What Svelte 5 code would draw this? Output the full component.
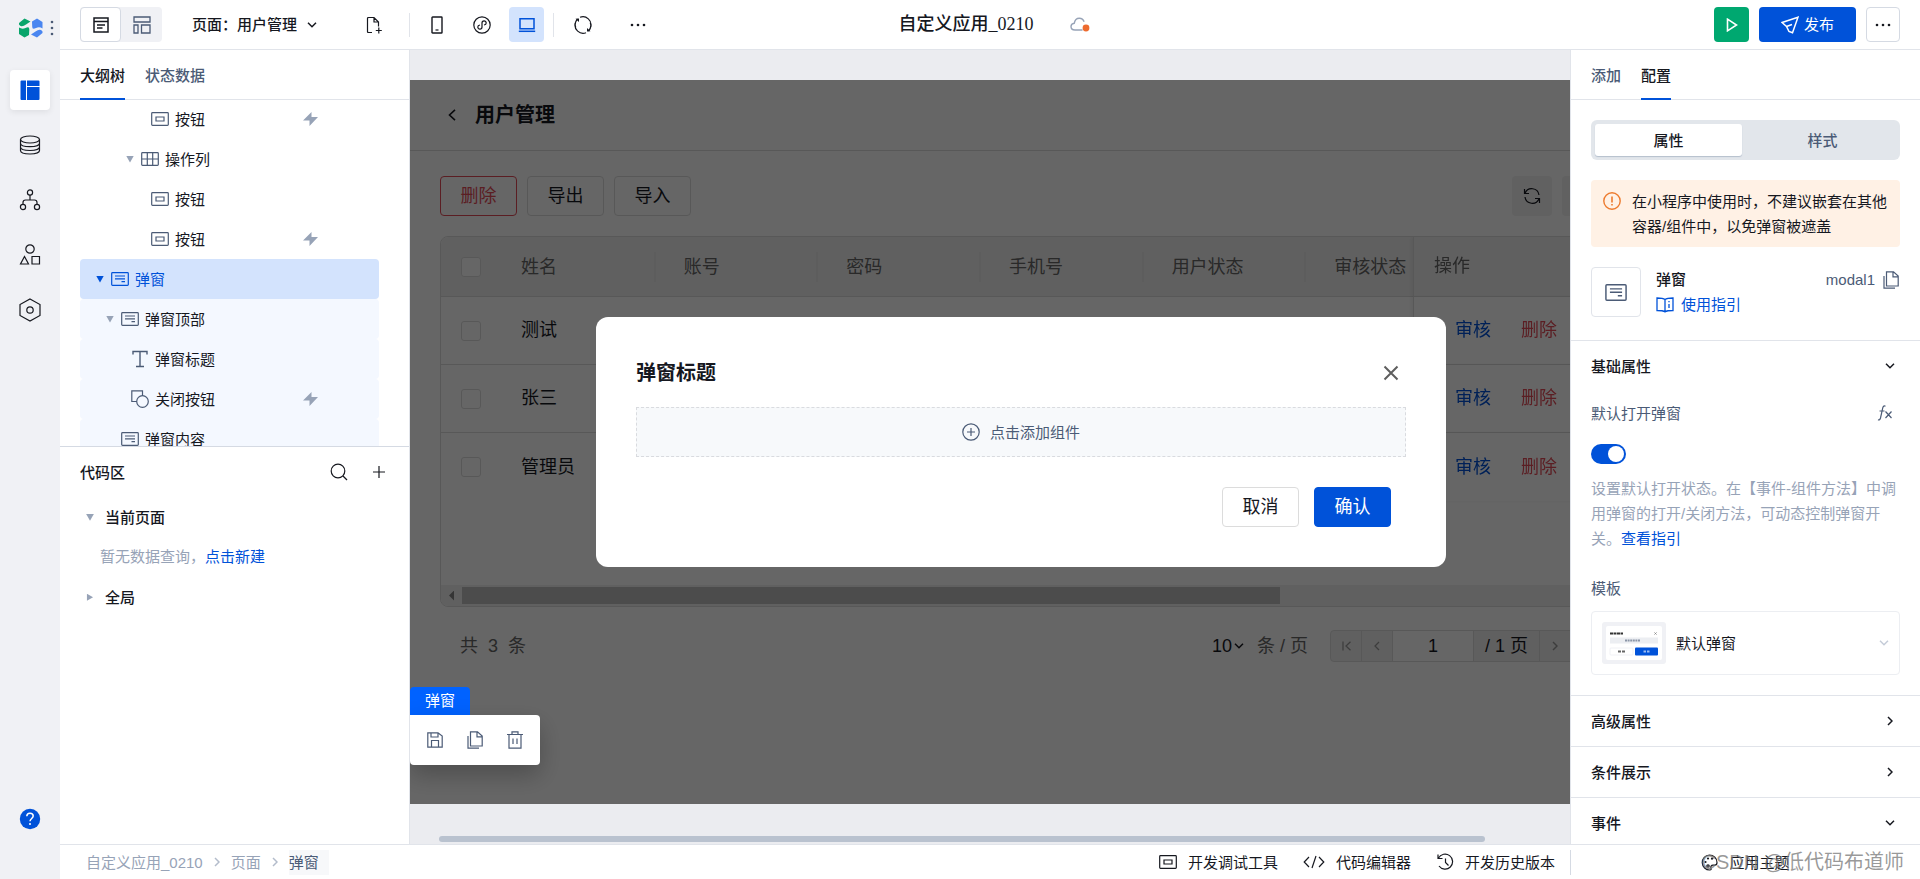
<script>
	let defaultOpen = $state(true);
	let pageNumber = $state('1');

	const icons = {
		logo: [24, 20, '<path fill="#09a56b" stroke="none" d="M0 5 5.500.5 11.500 3.500 7 6.500Q4.500 8.500 2.500 8.300 1 8 0 6.500zM0 9.500q3 2 6.500.5 4-2 3.800 1.500L10 17l-4.500 2.500L0 16z"/><path fill="#4a86f0" stroke="none" d="M13 3.500 18 .5 23.500 4v6.500q-3-2-6.500-.5-4 2-3.800-1.500zM23.500 15 18 19.500 12 16.500 16.500 13.500q2.500-2 4.500-1.800 1.500.3 2.500 1.800z"/>'],
		grip: [4, 16, '<g fill="#4b5b76" stroke="none"><circle cx="2" cy="2" r="1.300"/><circle cx="2" cy="8" r="1.300"/><circle cx="2" cy="14" r="1.300"/></g>'],
		layout: [20, 20, '<path fill="#0052d9" stroke="none" d="M1.500.5H6V20H1.500Q.5 20 .5 19V1.500Q.5.5 1.500.5zM7 .5h11.500q1 0 1 1V6H7zM7 7h12.500v12q0 1-1 1H7z"/>'],
		database: [22, 20, '<ellipse cx="11" cy="4.500" rx="9.500" ry="3.500"/><path d="M1.500 4.500v11c0 2 4 3.500 9.500 3.500s9.500-1.500 9.500-3.500v-11M1.500 8.200c0 2 4 3.500 9.500 3.500s9.500-1.500 9.500-3.500M1.500 12c0 2 4 3.500 9.500 3.500s9.500-1.500 9.500-3.500"/>'],
		flow: [22, 22, '<circle cx="11" cy="3.500" r="2.600"/><circle cx="4" cy="18" r="2.600"/><circle cx="18" cy="18" r="2.600"/><path d="M11 6v5M4 15v-1.500Q4 11 6.500 11h9q2.500 0 2.500 2.500V15"/>'],
		shapes: [22, 22, '<circle cx="11" cy="5" r="4.200"/><path d="M5.500 12.500 9.500 20h-8zM13 12.500h7.500V20H13z"/>'],
		hexagon: [24, 24, '<path d="m12 1 10 5.500v11L12 23 2 17.500v-11z"/><circle cx="12" cy="12" r="3.200"/>'],
		help: [22, 22, '<circle cx="11" cy="11" r="10.200" fill="#0052d9" stroke="none"/><path stroke="#fff" stroke-width="1.500" d="M7.800 8.300c0-2 1.400-3.100 3.200-3.100s3.200 1.100 3.200 2.900c0 2.300-3.200 2.600-3.200 5.200M11 15v2"/>'],
		page: [16, 16, '<path stroke-width="1.500" d="M1 1h14v14H1zM1 4.500h14M4 8h8M4 11h5.500"/>'],
		blocks: [18, 18, '<path stroke-width="1.300" d="M1 1h16v5H1zM1 9h4v8H1zM8.500 9H17v8H8.500z"/>'],
		down: [10, 6, '<path stroke-width="1.500" d="m1 .8 4 4 4-4"/>'],
		right: [6, 10, '<path stroke-width="1.500" d="m1 1 4 4-4 4"/>'],
		left: [6, 10, '<path stroke-width="1.300" d="M5 1 1 5l4 4"/>'],
		back: [8, 12, '<path stroke-width="1.600" d="M7 .8 1.500 6 7 11.200"/>'],
		first: [9, 10, '<path stroke-width="1.300" d="M1 .5v9M8.500.8 4 5l4.500 4.200"/>'],
		addFile: [18, 18, '<path d="M7 16.500H3.500Q2.500 16.500 2.500 15.500v-13q0-1 1-1H9L13.500 6v4.500M9 1.500V6h4.500M13.800 11.500v6M10.800 14.500h6"/>'],
		phone: [12, 18, '<rect x="1" y="1" width="10" height="16" rx=".6" stroke-width="1.400"/><path d="M4.500 14h3"/>'],
		mini: [18, 18, '<circle cx="9" cy="9" r="8.200"/><path d="M11 9c1.400-.2 2.200-1 2.200-2.100 0-1.200-1-2.100-2.100-2.100S9 5.700 9 6.900v4.200c0 1.200-1 2.100-2.100 2.100s-2.100-.9-2.100-2.100S5.600 9.200 7 9"/>'],
		laptop: [18, 16, '<path stroke-width="1.500" d="M2 1.800h14v10H2z"/><path stroke-width="1.500" d="M.8 14.300h16.400"/>'],
		sync: [20, 18, '<path d="M7 1.300A8.200 8.200 0 0 1 17.800 11M13 16.700A8.200 8.200 0 0 1 2.200 7M2.800 11.500A8.200 8.200 0 0 1 4.500 3M17.200 6.500A8.200 8.200 0 0 1 15.500 15"/><path fill="currentColor" stroke="none" d="M2.500 2.800 6 2.500V6zM17.500 15.200l-3.500.3V12z"/>'],
		dots: [16, 4, '<g fill="currentColor" stroke="none"><circle cx="2" cy="2" r="1.300"/><circle cx="8" cy="2" r="1.300"/><circle cx="14" cy="2" r="1.300"/></g>'],
		cloud: [20, 16, '<path stroke="#97a3b7" stroke-width="1.400" d="M12.500 13H5C2.500 13 1 11.300 1 9.500S2.300 6.400 4.300 6.200C4.800 3 6.800 1.200 9.300 1.200c2.400 0 4.100 1.500 4.800 3.600"/><circle cx="16" cy="11" r="3.400" fill="#ed6b2f" stroke="none"/>'],
		play: [12, 14, '<path stroke-width="1.600" d="M1.500 1.200 10.500 7l-9 5.800z"/>'],
		send: [18, 18, '<path stroke-width="1.500" d="M17 1.200 1 6.500 5.500 10.500 8 15.500 11.500 16.800zM5.500 10.500 11 8.500"/>'],
		button: [18, 14, '<rect x=".7" y=".7" width="16.600" height="12.600" rx=".8"/><path d="M5 5h8v4H5z"/>'],
		grid: [18, 14, '<rect x=".7" y=".7" width="16.600" height="12.600" rx=".8"/><path d="M.7 7h16.600M6.300.7v12.600M11.700.7v12.600"/>'],
		container: [18, 14, '<rect x=".7" y=".7" width="16.600" height="12.600" rx=".8"/><path d="M4 4h10M4 6.800h10M10.500 9.600H14"/>'],
		text: [18, 18, '<path stroke-width="1.400" d="M2 4.500V1.500h14v3M9 1.500v15M5 16.500h8"/>'],
		shape: [18, 18, '<path d="M6 11.500H.8V.8h10.700V6"/><circle cx="11.500" cy="11.500" r="5.800"/>'],
		bolt: [15, 14, '<path fill="#97a3b7" stroke="none" d="M8.500 0v5H15L6.500 14V8.500H0z"/>'],
		search: [18, 18, '<circle cx="8" cy="8" r="6.800"/><path d="m13 13 4 4"/>'],
		plus: [14, 14, '<path d="M7 1v12M1 7h12"/>'],
		refresh: [18, 18, '<path d="M1.500 2v4.500H6M2 6.300A7.300 7.300 0 0 1 16 8M16.500 16v-4.500H12M16 11.700A7.300 7.300 0 0 1 2 10"/>'],
		close: [16, 16, '<path stroke-width="2" d="m1.500 1.500 13 13M14.500 1.500l-13 13"/>'],
		addCircle: [18, 18, '<circle cx="9" cy="9" r="8.200"/><path d="M9 5v8M5 9h8"/>'],
		save: [16, 16, '<path d="M.8.8H11L15.200 4v11.200H.8zM4 .8V5h7V.8M4.500 15V8.500h7V15"/>'],
		copy: [16, 18, '<path d="M3.500.8h7L15.200 5v10H3.500zM10 .8v5h5M1 5v12.200h11"/>'],
		trash: [16, 18, '<path d="M0 3.500h16M5 3.500V.8h6v2.700M2 3.500v13.700h12V3.500M6 7.500v5.500M10 7.500v5.500"/>'],
		warn: [18, 18, '<circle cx="9" cy="9" r="8.200" stroke-width="1.400"/><path stroke-width="1.600" d="M9 4.500v6M9 12v1.600"/>'],
		book: [18, 16, '<path stroke-width="1.300" d="M9 2.500Q7 1 1 1v12.500q6 0 8 1.300 2-1.300 8-1.300V1Q11 1 9 2.500zM9 2.500v13M13 7v4M13 4v1.200"/>'],
		palette: [17, 17, '<path d="M8.500 1A7.500 7.500 0 1 0 9 16c1 0 1.500-.8 1-1.800-.7-1.600.3-3 2-3h1.800c1.600 0 2.200-1.200 2.200-2.700A7.500 7.500 0 0 0 8.500 1z"/><g fill="currentColor" stroke="none"><circle cx="4.500" cy="8" r="1.100"/><circle cx="7" cy="4.500" r="1.100"/><circle cx="11" cy="4.700" r="1.100"/></g><circle cx="7" cy="12" r="1.200"/>'],
		code: [22, 14, '<path d="M6 2 1.200 7 6 12M16 2l4.800 5L16 12M13 1 9 13"/>'],
		history: [18, 18, '<path d="M2.500 5A7.500 7.500 0 1 1 3 13M2 1.500v4h4.500M9.500 5.500v4l3 3"/>'],
		fx: [16, 16, '<path d="M8.500 1.200Q6.500.3 5.800 2.600L3.500 13Q2.800 15.500 1 14.700M2.500 6h5M8.500 6.500l6 6.500M14.500 6.500l-6 6.500"/>']
	};

	const sideItems = [
		{ icon: 'layout', label: '页面设计' },
		{ icon: 'database', label: '数据源' },
		{ icon: 'flow', label: '流程' },
		{ icon: 'shapes', label: '素材' },
		{ icon: 'hexagon', label: '设置' }
	];

	const treeRows = [
		{ level: 5, icon: 'button', name: '按钮', bolt: true },
		{ level: 4, icon: 'grid', name: '操作列', open: true },
		{ level: 5, icon: 'button', name: '按钮' },
		{ level: 5, icon: 'button', name: '按钮', bolt: true },
		{ level: 1, icon: 'container', name: '弹窗', open: true, selected: true },
		{ level: 2, icon: 'container', name: '弹窗顶部', open: true, inside: true },
		{ level: 3, icon: 'text', name: '弹窗标题', inside: true },
		{ level: 3, icon: 'shape', name: '关闭按钮', bolt: true, inside: true },
		{ level: 2, icon: 'container', name: '弹窗内容', inside: true }
	];

	const columns = ['姓名', '账号', '密码', '手机号', '用户状态', '审核状态'];
	const users = ['测试', '张三', '管理员'];

	const tools = [
		{ icon: 'button', name: '开发调试工具' },
		{ icon: 'code', name: '代码编辑器' },
		{ icon: 'history', name: '开发历史版本' }
	];
</script>

{#snippet icon(name)}
	<svg
		class="icon"
		width={icons[name][0]}
		height={icons[name][1]}
		viewBox="0 0 {icons[name][0]} {icons[name][1]}"
		aria-hidden="true"
	>{@html icons[name][2]}</svg>
{/snippet}

<div class="app">
	<aside class="sidebar">
		<div class="brand">
			{@render icon('logo')}
			{@render icon('grip')}
		</div>
		<nav>
			{#each sideItems as item, i}
				<button class:active={i === 0} aria-label={item.label}>{@render icon(item.icon)}</button>
			{/each}
		</nav>
		<button class="help" aria-label="帮助">{@render icon('help')}</button>
	</aside>

	<header class="topbar">
		<div class="top-left">
			<div class="view-switch">
				<button class="on" aria-label="页面视图">{@render icon('page')}</button>
				<button aria-label="布局视图">{@render icon('blocks')}</button>
			</div>
			<label class="page-picker">
				<select aria-label="页面">
					<option>页面：用户管理</option>
				</select>
				{@render icon('down')}
			</label>
			<button class="tool new-page" aria-label="新建页面">{@render icon('addFile')}</button>
			<div class="devices">
				<button class="tool" aria-label="手机">{@render icon('phone')}</button>
				<button class="tool" aria-label="小程序">{@render icon('mini')}</button>
				<button class="tool on" aria-label="电脑">{@render icon('laptop')}</button>
			</div>
			<button class="tool" aria-label="刷新">{@render icon('sync')}</button>
			<button class="tool more-tools" aria-label="更多">{@render icon('dots')}</button>
		</div>
		<div class="app-name">
			<h1>自定义应用_0210</h1>
			{@render icon('cloud')}
		</div>
		<div class="top-right">
			<button class="preview" aria-label="预览">{@render icon('play')}</button>
			<button class="publish">{@render icon('send')}发布</button>
			<button class="more" aria-label="更多">{@render icon('dots')}</button>
		</div>
	</header>

	<section class="left-panel">
		<div class="tabs">
			<button class="on">大纲树</button>
			<button>状态数据</button>
		</div>
		<ul class="tree">
			{#each treeRows as row}
				<li class="level-{row.level}" class:selected={row.selected} class:inside={row.inside}>
					<span class="caret" class:open={row.open}></span>
					<span class="node-icon">{@render icon(row.icon)}</span>
					<span class="node-name">{row.name}</span>
					{#if row.bolt}{@render icon('bolt')}{/if}
				</li>
			{/each}
		</ul>
		<div class="code-area">
			<div class="code-head">
				<h2>代码区</h2>
				<button aria-label="搜索">{@render icon('search')}</button>
				<button aria-label="添加">{@render icon('plus')}</button>
			</div>
			<div class="code-row"><span class="caret open"></span>当前页面</div>
			<p>暂无数据查询，<a href="#new">点击新建</a></p>
			<div class="code-row"><span class="caret closed"></span>全局</div>
		</div>
	</section>

	<main class="canvas">
		<div class="stage">
			<div class="page-head">
				{@render icon('back')}
				<h2>用户管理</h2>
			</div>
			<div class="actions">
				<button class="btn danger">删除</button>
				<button class="btn">导出</button>
				<button class="btn">导入</button>
				<button class="square push" aria-label="刷新表格">{@render icon('refresh')}</button>
				<button class="square" aria-label="表格设置"></button>
			</div>
			<div class="table-box">
				<div class="table-scroll">
					<table>
						<thead>
							<tr>
								<th class="check"><input type="checkbox" aria-label="全选" /></th>
								{#each columns as column}
									<th><span>{column}</span></th>
								{/each}
								<th class="fixed">操作</th>
							</tr>
						</thead>
						<tbody>
							{#each users as user}
								<tr>
									<td class="check"><input type="checkbox" aria-label={user} /></td>
									<td>{user}</td>
									<td></td>
									<td></td>
									<td></td>
									<td></td>
									<td></td>
									<td class="fixed">
										<a href="#review">审核</a>
										<a href="#delete" class="delete">删除</a>
									</td>
								</tr>
							{/each}
						</tbody>
					</table>
				</div>
				<div class="table-bar">
					<span class="arrow"></span>
					<span class="thumb"></span>
				</div>
			</div>
			<div class="pagination">
				<span class="total">共&nbsp; 3 &nbsp;条</span>
				<label class="page-size">
					<select aria-label="每页条数">
						<option>10</option>
					</select>
					{@render icon('down')}
					<span>条 / 页</span>
				</label>
				<div class="pager">
					<button aria-label="首页">{@render icon('first')}</button>
					<button aria-label="上一页">{@render icon('left')}</button>
					<input aria-label="页码" bind:value={pageNumber} />
					<span>/ 1 页</span>
					<button aria-label="下一页">{@render icon('right')}</button>
					<button aria-label="末页"></button>
				</div>
			</div>

			<div class="mask">
				<div class="modal" role="dialog" aria-labelledby="modal-title">
					<div class="modal-head">
						<h2 id="modal-title">弹窗标题</h2>
						<button aria-label="关闭">{@render icon('close')}</button>
					</div>
					<button class="slot">{@render icon('addCircle')}点击添加组件</button>
					<div class="modal-foot">
						<button class="btn">取消</button>
						<button class="btn primary">确认</button>
					</div>
				</div>
			</div>
		</div>

		<div class="node-tools">
			<span>弹窗</span>
			<div>
				<button aria-label="保存">{@render icon('save')}</button>
				<button aria-label="复制">{@render icon('copy')}</button>
				<button aria-label="删除组件">{@render icon('trash')}</button>
			</div>
		</div>
		<div class="canvas-bar"></div>
	</main>

	<section class="right-panel">
		<div class="tabs">
			<button>添加</button>
			<button class="on">配置</button>
		</div>
		<div class="config">
			<div class="segment">
				<button class="on">属性</button>
				<button>样式</button>
			</div>
			<div class="alert">
				{@render icon('warn')}
				<p>在小程序中使用时，不建议嵌套在其他容器/组件中，以免弹窗被遮盖</p>
			</div>
			<div class="component">
				<div class="component-icon">{@render icon('container')}</div>
				<div class="component-info">
					<strong>弹窗</strong>
					<a href="#guide">{@render icon('book')}使用指引</a>
				</div>
				<div class="component-id">modal1 <button aria-label="复制标识">{@render icon('copy')}</button></div>
			</div>
		</div>

		<div class="group basic">
			<button class="group-head">基础属性{@render icon('down')}</button>
			<div class="field-head">
				<label for="default-open">默认打开弹窗</label>
				<button aria-label="表达式">{@render icon('fx')}</button>
			</div>
			<input id="default-open" class="toggle" type="checkbox" bind:checked={defaultOpen} />
			<p class="hint">设置默认打开状态。在【事件-组件方法】中调用弹窗的打开/关闭方法，可动态控制弹窗开关。<a href="#docs">查看指引</a></p>
			<label class="template-label" for="template">模板</label>
			<div class="template">
				<svg width="64" height="42" viewBox="0 0 64 42" aria-hidden="true">
					<rect width="64" height="42" rx="3" fill="#f0f1f5" />
					<rect x="4" y="4" width="56" height="34" rx="2" fill="#fff" />
					<path d="M8 11.500h13" stroke="#333" stroke-width="2" stroke-dasharray="3 .5" />
					<path d="m52.500 10.500 2 2m0-2-2 2" stroke="#888" />
					<rect x="8" y="15.500" width="48" height="6" fill="#eceef2" />
					<path d="M23 18.500h15" stroke="#8c96a8" stroke-width="2" stroke-dasharray="2 .6" />
					<rect x="8" y="26" width="23" height="7" rx="1" fill="none" stroke="#f0f1f5" />
					<path d="M16 29.500h7" stroke="#666" stroke-width="2" stroke-dasharray="3 1" />
					<rect x="33" y="25.500" width="23" height="8" rx="1" fill="#0052d9" />
					<path d="M41.500 29.500h6" stroke="#9dbcf0" stroke-width="2" stroke-dasharray="2.500 1" />
				</svg>
				<select id="template">
					<option>默认弹窗</option>
				</select>
				{@render icon('down')}
			</div>
		</div>
		<div class="group"><button class="group-head">高级属性{@render icon('right')}</button></div>
		<div class="group"><button class="group-head">条件展示{@render icon('right')}</button></div>
		<div class="group"><button class="group-head">事件{@render icon('down')}</button></div>
	</section>

	<footer class="statusbar">
		<nav class="crumbs">
			<a href="#app">自定义应用_0210</a>
			{@render icon('right')}
			<a href="#page">页面</a>
			{@render icon('right')}
			<span>弹窗</span>
		</nav>
		<div class="status-tools">
			{#each tools as tool}
				<button>{@render icon(tool.icon)}{tool.name}</button>
			{/each}
		</div>
		<div class="theme">
			<button>{@render icon('palette')}应用主题</button>
		</div>
		<span class="watermark">CSDN @低代码布道师</span>
	</footer>
</div>

<style>
	:global(body) {
		margin: 0;
	}

	.app {
		--blue: #0052d9;
		--ink: #16181f;
		--slate: #4b5b76;
		--mute: #97a3b7;
		--line: #e1e4ea;

		display: grid;
		grid-template-columns: 60px 350px minmax(0, 1fr) 350px;
		grid-template-rows: 50px minmax(0, 1fr) 35px;
		height: 100vh;
		overflow: hidden;
		background: #fff;
		color: var(--ink);
		font: 15px/25px 'Liberation Sans', 'Noto Sans CJK SC', sans-serif;
	}

	.app :global(*) {
		box-sizing: border-box;
	}

	.icon {
		flex: none;
		display: block;
		fill: none;
		stroke: currentColor;
		stroke-width: 1.2;
	}

	button,
	select,
	input {
		margin: 0;
		padding: 0;
		border: 0;
		background: none;
		color: inherit;
		font: inherit;
	}

	button {
		display: flex;
		align-items: center;
		justify-content: center;
		cursor: pointer;
	}

	select {
		appearance: none;
	}

	h1,
	h2,
	p,
	ul {
		margin: 0;
		padding: 0;
	}

	a {
		color: var(--blue);
		text-decoration: none;
	}

	/* sidebar */
	.sidebar {
		grid-row: 1 / -1;
		display: flex;
		flex-direction: column;
		align-items: center;
		padding-bottom: 49px;
		background: #f0f1f5;

		& .brand {
			display: flex;
			align-items: center;
			gap: 7px;
			height: 55px;
			padding-left: 12px;
		}

		& nav {
			display: flex;
			flex-direction: column;
			gap: 15px;
			padding-top: 15px;
		}

		& nav button {
			width: 40px;
			height: 40px;
			border-radius: 4px;

			&.active {
				background: #fff;
				box-shadow: 0 2px 6px rgba(0, 0, 0, .08);
			}
		}

		& .help {
			margin-top: auto;
		}
	}

	/* topbar */
	.topbar {
		grid-column: 2 / -1;
		display: grid;
		grid-template-columns: 1fr auto 1fr;
		align-items: center;
		padding: 0 20px;
		border-bottom: 1px solid var(--line);
	}

	.top-left,
	.top-right {
		display: flex;
		align-items: center;
	}

	.view-switch {
		display: flex;
		border-radius: 4px;
		background: #f0f1f5;

		& button {
			width: 41px;
			height: 35px;
			color: var(--slate);

			&.on {
				border: 1px solid #d5dae3;
				border-radius: 4px;
				background: #fff;
				color: var(--ink);
			}
		}
	}

	.page-picker {
		display: flex;
		align-items: center;
		gap: 10px;
		margin-left: 30px;
		font-weight: 500;

		& select {
			width: 105px;
		}
	}

	.tool {
		width: 35px;
		height: 35px;
		border-radius: 4px;

		&.on {
			background: #d3e3fd;
			color: var(--blue);
		}
	}

	.new-page {
		margin-left: 39px;
	}

	.devices {
		display: flex;
		gap: 10px;
		margin: 0 11px 0 18px;
		padding: 0 10px;
		background:
			linear-gradient(var(--line), var(--line)) left / 1px 24px no-repeat,
			linear-gradient(var(--line), var(--line)) right / 1px 24px no-repeat;
	}

	.more-tools {
		margin-left: 20px;
	}

	.app-name {
		display: flex;
		align-items: center;
		gap: 36px;
		padding-left: 8px;

		& h1 {
			font: 500 18px/25px 'Liberation Serif', 'Noto Sans CJK SC', serif;
		}
	}

	.top-right {
		justify-content: flex-end;
		gap: 10px;

		& button {
			height: 35px;
			border-radius: 4px;
		}

		& .preview {
			width: 35px;
			background: #00a870;
			color: #fff;
		}

		& .publish {
			gap: 5px;
			width: 97px;
			background: var(--blue);
			color: #fff;
		}

		& .more {
			width: 34px;
			border: 1px solid #d5dae3;
		}
	}

	/* side panels */
	.tabs {
		position: relative;
		display: flex;
		gap: 20px;
		height: 49px;
		padding: 0 20px;
		box-shadow: 0 1px var(--line);

		& button {
			height: 50px;
			color: var(--slate);
			font-weight: 500;

			&.on {
				border-bottom: 2px solid var(--blue);
				border-top: 2px solid transparent;
				color: var(--ink);
			}
		}
	}

	.left-panel {
		display: flex;
		flex-direction: column;
		border-right: 1px solid var(--line);
	}

	.caret {
		flex: none;
		width: 8px;
		height: 7px;
		color: var(--mute);

		&.open {
			background: currentColor;
			clip-path: polygon(0 0, 100% 0, 50% 100%);
		}

		&.closed {
			background: currentColor;
			clip-path: polygon(12% 0, 88% 50%, 12% 100%);
		}
	}

	.tree {
		flex: 7 1 0;
		min-height: 0;
		margin: 0 30px 0 20px;
		overflow: hidden;
		list-style: none;

		& li {
			display: flex;
			align-items: center;
			height: 40px;
			padding-right: 61px;
			border-radius: 4px;
		}

		& .level-1 { padding-left: 16px; }
		& .level-2 { padding-left: 26px; }
		& .level-3 { padding-left: 36px; }
		& .level-4 { padding-left: 46px; }
		& .level-5 { padding-left: 56px; }

		& .inside {
			background: #f4f8ff;
		}

		& .selected,
		& .selected .caret,
		& .selected .node-icon {
			color: var(--blue);
		}

		& .selected {
			background: #d3e3fd;
		}
	}

	.node-icon {
		margin: 0 6px 0 7px;
		color: var(--slate);
	}

	.node-name {
		flex: 1;
	}

	.code-area {
		flex: 8 1 0;
		border-top: 1px solid #d5dae3;

		& p {
			height: 40px;
			padding-left: 40px;
			color: var(--mute);
			line-height: 40px;
		}
	}

	.code-head {
		display: flex;
		align-items: center;
		gap: 24px;
		height: 50px;
		padding: 0 23px 0 20px;

		& h2 {
			flex: 1;
			font-size: 15px;
			font-weight: 500;
		}
	}

	.code-row {
		display: flex;
		align-items: center;
		gap: 11px;
		height: 40px;
		padding-left: 26px;
		font-weight: 500;
	}

	/* canvas */
	.canvas {
		position: relative;
		display: flex;
		flex-direction: column;
		padding-top: 30px;
		overflow: hidden;
		background: #ebecf0;
	}

	.stage {
		position: relative;
		flex: 1;
		width: calc(100% + 62px);
		padding: 0 30px;
		background: #fff;
		font-size: 18px;
	}

	.page-head {
		display: flex;
		align-items: center;
		gap: 19px;
		height: 71px;
		margin: 0 -30px;
		padding-left: 38px;
		border-bottom: 1px solid #dcdcdc;

		& h2 {
			font-size: 20px;
			font-weight: 700;
		}
	}

	.btn {
		width: 77px;
		height: 40px;
		border: 1px solid #dcdcdc;
		border-radius: 4px;
		background: #fff;
		font-size: 18px;

		&.danger {
			border-color: #e34d59;
			color: #e34d59;
		}

		&.primary {
			border-color: var(--blue);
			background: var(--blue);
			color: #fff;
		}
	}

	.actions {
		display: flex;
		gap: 10px;
		padding: 25px 0 20px;

		& .square {
			width: 40px;
			height: 40px;
			border-radius: 4px;
			background: #f3f3f3;
		}

		& .push {
			margin-left: auto;
		}
	}

	.table-box {
		overflow: hidden;
		border: 1px solid #dcdcdc;
		border-radius: 8px;
	}

	.table-scroll {
		height: 348px;
		overflow: hidden;
	}

	table {
		width: 1216px;
		table-layout: fixed;
		border-spacing: 0;
	}

	th,
	td {
		height: 68px;
		padding: 0;
		border-bottom: 1px solid #dcdcdc;
		background: #fff;
		text-align: left;
		font-weight: 400;
		white-space: nowrap;
	}

	tr:last-child td {
		border-bottom: 0;
	}

	th {
		height: 60px;
		background: #f1f1f1;
		color: #666;

		& span {
			display: block;
			padding-left: 28px;
			border-right: 2px solid #e9e9e9;
			line-height: 30px;
		}
	}

	thead th {
		border-bottom-color: #dcdcdc;
	}

	td {
		padding-left: 28px;
	}

	.check {
		width: 52px;
		padding-left: 20px;

		& input {
			display: block;
			width: 20px;
			height: 20px;
			appearance: none;
			border: 1px solid #dcdcdc;
			border-radius: 3px;
			background: #fff;
		}
	}

	.fixed {
		position: sticky;
		right: 0;
		width: 188px;
		padding-left: 20px;
		border-left: 1px solid #dcdcdc;
		box-shadow: -2px 0 4px rgba(0, 0, 0, .06);

		& a {
			display: inline-block;
			margin-right: 25px;
		}

		& .delete {
			color: #e34d59;
		}
	}

	td.fixed {
		padding-left: 41px;
	}

	.table-bar {
		display: flex;
		align-items: center;
		gap: 8px;
		height: 21px;
		padding-left: 8px;
		background: #f1f1f1;

		& .arrow {
			width: 5px;
			height: 10px;
			background: #858585;
			clip-path: polygon(100% 0, 100% 100%, 0 50%);
		}

		& .thumb {
			width: 71%;
			height: 17px;
			background: #bebebe;
		}
	}

	.pagination {
		display: flex;
		align-items: center;
		padding: 23px 0 0 20px;

		& .total {
			flex: 1;
			color: #666;
		}
	}

	.page-size {
		display: flex;
		align-items: center;

		& select {
			width: 22px;
		}

		& span {
			margin: 0 22px 0 13px;
			color: #666;
		}
	}

	.pager {
		display: flex;
		overflow: hidden;
		border: 1px solid #dcdcdc;
		border-radius: 4px;
		background: #f1f1f1;
		line-height: 30px;

		& > * {
			height: 30px;
			border-left: 1px solid #dcdcdc;
		}

		& button {
			width: 31px;
			color: #999;

			&:first-child {
				width: 30px;
				border-left: 0;
			}
		}

		& input {
			width: 81px;
			background: #fff;
			text-align: center;
		}

		& span {
			width: 66px;
			text-align: center;
		}
	}

	.mask {
		position: absolute;
		z-index: 2;
		inset: 0;
		display: flex;
		align-items: center;
		justify-content: center;
		background: rgba(0, 0, 0, .6);
	}

	.modal {
		width: 850px;
		padding: 40px;
		border-radius: 12px;
		background: #fff;
	}

	.modal-head {
		display: flex;
		align-items: center;
		justify-content: space-between;
		height: 32px;
		margin-bottom: 18px;

		& h2 {
			font-size: 20px;
			font-weight: 700;
		}

		& button {
			width: 30px;
			height: 30px;
			color: #5e5e5e;
		}
	}

	.slot {
		gap: 10px;
		width: 100%;
		height: 50px;
		border: 1px dashed #d9dbdf;
		background: #f7f9fb;
		color: var(--slate);
		font-size: 15px;
	}

	.modal-foot {
		display: flex;
		justify-content: flex-end;
		gap: 15px;
		padding: 30px 15px 0 0;
	}

	.node-tools {
		position: absolute;
		z-index: 3;
		bottom: 79px;
		left: 0;

		& span {
			display: block;
			width: 60px;
			height: 28px;
			border-radius: 4px 4px 0 0;
			background: #0062ff;
			color: #fff;
			line-height: 28px;
			text-align: center;
		}

		& div {
			display: flex;
			justify-content: center;
			gap: 24px;
			width: 130px;
			height: 50px;
			border-radius: 0 4px 4px 4px;
			background: #fff;
			box-shadow: 0 10px 24px rgba(0, 0, 0, .25);
			color: var(--slate);
		}
	}

	.canvas-bar {
		height: 6px;
		margin: 32px 85px 2px 29px;
		border-radius: 3px;
		background: #b9c2cf;
	}

	/* config panel */
	.right-panel {
		overflow: hidden;
		border-left: 1px solid var(--line);
	}

	.config {
		padding: 21px 20px 23px;
	}

	.segment {
		display: flex;
		gap: 7px;
		height: 40px;
		padding: 4px;
		border-radius: 6px;
		background: #e2e6eb;

		& button {
			flex: 1;
			border-radius: 3px;
			color: var(--slate);
			font-weight: 500;

			&.on {
				background: #fff;
				box-shadow: 0 1px 1px #b5bfcd;
				color: var(--ink);
			}
		}
	}

	.alert {
		display: flex;
		gap: 11px;
		margin: 20px 0;
		padding: 9px 12px 8px;
		border-radius: 4px;
		background: #fff1e5;

		& :global(svg) {
			margin-top: 3px;
			color: #ed7b2f;
		}
	}

	.component {
		display: flex;
		gap: 15px;
	}

	.component-icon {
		display: flex;
		align-items: center;
		justify-content: center;
		width: 50px;
		height: 50px;
		border: 1px solid var(--line);
		border-radius: 4px;
		color: var(--slate);

		& :global(svg) {
			width: 22px;
			height: 17px;
		}
	}

	.component-info {
		flex: 1;

		& strong {
			display: block;
			font-weight: 500;
		}

		& a {
			display: flex;
			align-items: center;
			gap: 7px;
		}
	}

	.component-id {
		display: flex;
		gap: 8px;
		height: 25px;
		padding-right: 1px;
		color: var(--slate);
	}

	.group {
		padding: 0 20px;
		border-top: 1px solid var(--line);

		&.basic {
			padding-bottom: 20px;
		}
	}

	.group-head {
		justify-content: space-between;
		width: 100%;
		height: 50px;
		padding-right: 5px;
		font-weight: 500;

		& :global(svg) {
			margin: 0 2px;
		}

		& :global(svg[width='10']) {
			margin: 0;
		}
	}

	.field-head {
		display: flex;
		align-items: center;
		justify-content: space-between;
		height: 44px;
		padding-right: 7px;
		color: var(--slate);
	}

	.toggle {
		display: flex;
		align-items: center;
		width: 35px;
		height: 20px;
		margin: 9px 0 12px;
		padding: 2px;
		appearance: none;
		border-radius: 10px;
		background: #c5ccd8;

		&::before {
			content: '';
			width: 16px;
			height: 16px;
			border-radius: 50%;
			background: #fff;
		}

		&:checked {
			justify-content: flex-end;
			background: var(--blue);
		}
	}

	.hint {
		color: var(--mute);
	}

	.template-label {
		display: block;
		padding: 25px 0 10px;
		color: var(--slate);
	}

	.template {
		display: flex;
		align-items: center;
		gap: 10px;
		height: 64px;
		padding: 0 10px;
		border: 1px solid #eceef2;
		border-radius: 4px;

		& select {
			flex: 1;
		}

		& :global(.icon) {
			color: #c5ccd8;
		}
	}

	/* status bar */
	.statusbar {
		position: relative;
		grid-column: 2 / -1;
		display: flex;
		align-items: center;
		border-top: 1px solid var(--line);

		& button {
			gap: 11px;
		}
	}

	.crumbs {
		flex: 1;
		display: flex;
		align-items: center;
		gap: 11px;
		padding-left: 26px;
		color: #b3bccb;

		& a {
			color: var(--mute);
		}

		& span {
			padding-right: 10px;
			background: #f7f8fa;
			color: var(--slate);
		}
	}

	.status-tools {
		display: flex;
		gap: 25px;
		padding-right: 15px;
	}

	.theme {
		display: flex;
		justify-content: center;
		width: 350px;
		border-left: 1px solid #d5dae3;
	}

	.watermark {
		position: absolute;
		right: 16px;
		color: rgba(120, 120, 120, .75);
		font-size: 20px;
		pointer-events: none;
	}
</style>
